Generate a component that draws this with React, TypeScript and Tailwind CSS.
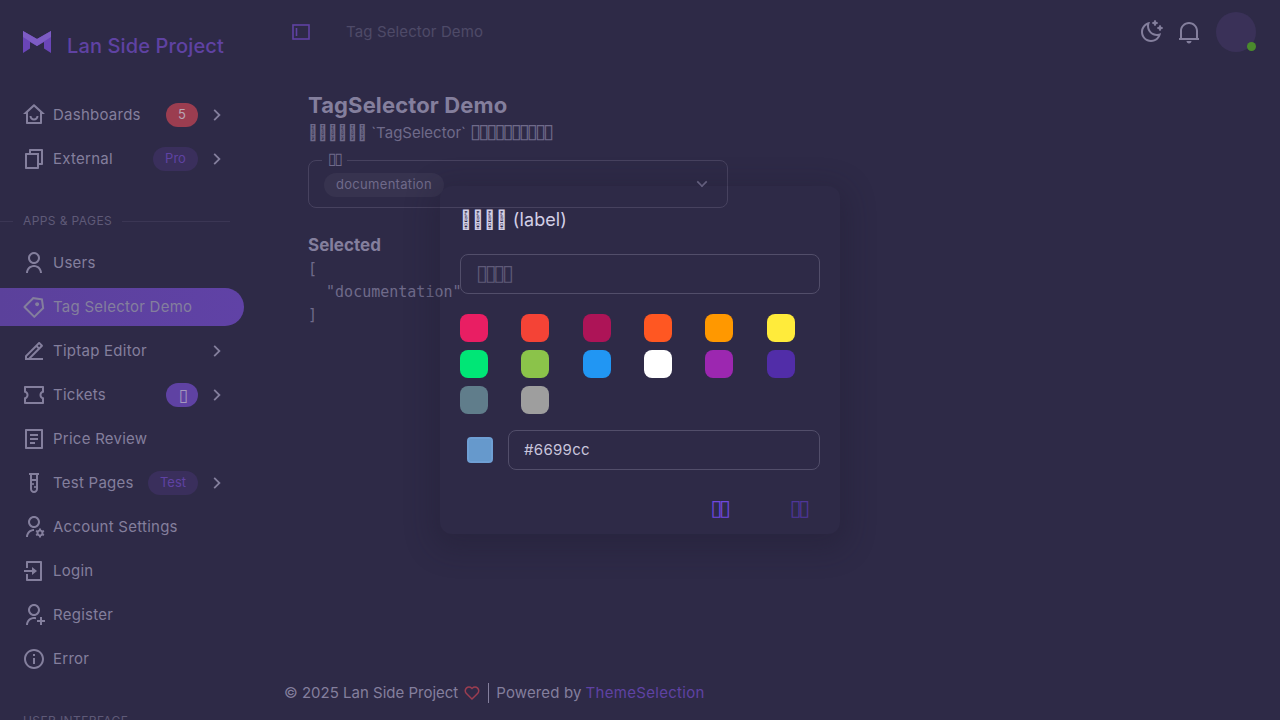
import React from "react";
import {
  RiArrowDownSLine,
  RiArrowRightSLine,
  RiFileList2Line,
  RiFileCopyLine,
  RiHeartLine,
  RiHomeSmileLine,
  RiInformationLine,
  RiLoginBoxLine,
  RiMoonClearLine,
  RiNotification2Line,
  RiEdit2Line,
  RiPriceTag3Line,
  RiTestTubeLine,
  RiTicketLine,
  RiUserAddLine,
  RiUserLine,
  RiUserSettingsLine,
} from "react-icons/ri";

// code point no font has: draws as the little hex box seen in the picture
const HEX = "\u{F0000}";

// the other missing glyphs in the picture are plain empty boxes
function Boxes({ count }: { count: number }) {
  return (
    <span className="font-['DejaVu_Sans'] text-[1.35em] leading-[0] tracking-[-0.15em]">{"\u25AF".repeat(count)}</span>
  );
}

const swatches = [
  "#e91e63",
  "#f44336",
  "#ad1457",
  "#ff5722",
  "#ff9800",
  "#ffeb3b",
  "#00e676",
  "#8bc34a",
  "#2196f3",
  "#ffffff",
  "#9c27b0",
  "#512da8",
  "#607d8b",
  "#9e9e9e",
];

type NavItem = {
  label: string;
  icon: React.ElementType;
  badge?: React.ReactNode;
  badgeClass?: string;
  chevron?: boolean;
  active?: boolean;
};

const topNav: NavItem[] = [
  { label: "Dashboards", icon: RiHomeSmileLine, badge: "5", badgeClass: "w-8 bg-[#9b3d50] text-[#b9a6b4]", chevron: true },
  { label: "External", icon: RiFileCopyLine, badge: "Pro", badgeClass: "w-[45px] bg-[#3a2f5c] text-[#5f42a3]", chevron: true },
];

const pageNav: NavItem[] = [
  { label: "Users", icon: RiUserLine },
  { label: "Tag Selector Demo", icon: RiPriceTag3Line, active: true },
  { label: "Tiptap Editor", icon: RiEdit2Line, chevron: true },
  { label: "Tickets", icon: RiTicketLine, badge: <Boxes count={1} />, badgeClass: "w-8 bg-[#5f42a3] text-[#a397bd]", chevron: true },
  { label: "Price Review", icon: RiFileList2Line },
  { label: "Test Pages", icon: RiTestTubeLine, badge: "Test", badgeClass: "w-[50px] bg-[#3a2f5c] text-[#5f42a3]", chevron: true },
  { label: "Account Settings", icon: RiUserSettingsLine },
  { label: "Login", icon: RiLoginBoxLine },
  { label: "Register", icon: RiUserAddLine },
  { label: "Error", icon: RiInformationLine },
];

function NavRow({ item }: { item: NavItem }) {
  const Icon = item.icon;
  return (
    <div
      className={`flex h-[38px] w-[244px] items-center rounded-r-full pl-[22px] pr-[18px] ${
        item.active ? "bg-gradient-to-r from-[#5b419b] to-[#6042a6]" : ""
      }`}
    >
      <Icon size={24} className="mr-[7px] shrink-0 text-[#847f9d]" />
      <span className="flex-1 text-[15px] tracking-[0.25px] text-[#847f9d]">{item.label}</span>
      {item.badge && (
        <span className={`flex h-6 items-center justify-center rounded-full text-[13px] ${item.badgeClass}`}>
          {item.badge}
        </span>
      )}
      {item.chevron && <RiArrowRightSLine size={22} className="ml-[8px] -mr-[2px] text-[#847f9d]" />}
    </div>
  );
}

function SectionLabel({ text }: { text: string }) {
  return (
    <div className="flex h-[20px] w-[230px] items-center">
      <div className="h-px w-[13px] bg-[#3b3654]" />
      <span className="mx-[10px] text-xs tracking-[0.4px] text-[#5f5a78]">{text}</span>
      <div className="h-px flex-1 bg-[#3b3654]" />
    </div>
  );
}

function Logo() {
  return (
    <svg width="28" height="22" viewBox="0 0 28 22">
      <path d="M0 0 L14 8 L28 0 V22 L21 17.5 V11 L14 15 L7 11 V17.5 L0 22 Z" fill="#6a45b8" />
      <path d="M0 0 L14 8 L28 0 V6 L14 15 L0 6 Z" fill="#7d5cc4" />
    </svg>
  );
}

export default function App() {
  return (
    <div
      className="relative h-[720px] w-[1280px] overflow-hidden bg-[#2e2a47]"
      style={{ fontFamily: "Inter, 'Liberation Sans', sans-serif" }}
    >
      <div className="flex h-full">
        {/* Sidebar */}
        <aside className="w-[260px] shrink-0 overflow-hidden">
          <div className="flex h-[96px] items-center pl-[23px] pb-[4px]">
            <div className="-mt-[8px]">
              <Logo />
            </div>
            <span className="ml-4 text-xl font-medium tracking-[0.13px] text-[#5f42a3]">Lan Side Project</span>
          </div>
          {topNav.map((item) => (
            <div key={item.label} className="mb-[6px]">
              <NavRow item={item} />
            </div>
          ))}
          <div className="mt-[33px] mb-[13px]">
            <SectionLabel text="APPS & PAGES" />
          </div>
          {pageNav.map((item) => (
            <div key={item.label} className="mb-[6px]">
              <NavRow item={item} />
            </div>
          ))}
          <div className="mt-[33px]">
            <SectionLabel text="USER INTERFACE" />
          </div>
        </aside>

        {/* Main */}
        <main className="flex min-w-0 flex-1 flex-col">
          <header className="flex h-[64px] items-center pl-[32px] pr-[24px]">
            <svg width="18" height="16" viewBox="0 0 18 16" fill="none" className="text-[#5f42a3]">
              <rect x="1" y="1" width="16" height="14" stroke="currentColor" strokeWidth="1.6" />
              <path d="M4.5 4 V12" stroke="currentColor" strokeWidth="1.6" />
            </svg>
            <span className="ml-[36px] text-[15px] tracking-[0.12px] text-[#4e4a68]">Tag Selector Demo</span>
            <div className="ml-auto flex items-center">
              <RiMoonClearLine size={24} className="text-[#847f9d]" />
              <RiNotification2Line size={24} className="ml-[14px] text-[#847f9d]" />
              <div className="relative ml-[15px] h-10 w-10 rounded-full bg-[#3a3158]">
                <span className="absolute bottom-[1px] right-0 h-[9px] w-[9px] rounded-full bg-[#4a8a2c]" />
              </div>
            </div>
          </header>

          <div className="pl-[48px] pt-[26px]">
            <h1 className="text-[22px] font-bold leading-[30px] tracking-[0.12px] text-[#847f9d]">TagSelector Demo</h1>
            <p className="text-[15px] leading-[26px] text-[#6f6a8a]">
              {HEX.repeat(6)} `TagSelector` <Boxes count={10} />
            </p>

            <div className="relative mt-[14px] flex h-[48px] w-[420px] items-center justify-between rounded-lg border border-[#47425f] pl-[15px] pr-[15px]">
              <span className="absolute -top-[8px] left-[13px] bg-[#2e2a47] px-[6px] text-xs leading-[14px] text-[#6f6a8a]">
                <Boxes count={2} />
              </span>
              <span className="mt-[1px] flex h-6 items-center rounded-full bg-[#37334f] px-3 text-[13px] tracking-[0.3px] text-[#6f6a8a]">
                documentation
              </span>
              <RiArrowDownSLine size={20} className="text-[#6f6a8a]" />
            </div>

            <h2 className="mt-[26px] text-[17px] font-bold leading-[22px] text-[#847f9d]">Selected</h2>
            <pre
              className="mt-[2px] text-[15px] leading-[23px] text-[#6f6a8a]"
              style={{ fontFamily: "'DejaVu Sans Mono', monospace" }}
            >
              {'[\n  "documentation"\n]'}
            </pre>
          </div>

          <footer className="mt-auto flex h-[54px] items-center pl-[24px] text-[15px] text-[#847f9d]">
            <span>© 2025 Lan Side Project</span>
            <RiHeartLine size={18} className="mx-[5px] text-[#9b3d50]" />
            <span className="mr-[7px] ml-[2px] h-[20px] w-px bg-[#847f9d]" />
            <span className="tracking-[0.15px]">Powered by</span>
            <span className="ml-1 tracking-[0.3px] text-[#5f42a3]">ThemeSelection</span>
          </footer>
        </main>
      </div>

      {/* Dialog, still fading in */}
      <div className="absolute left-[440px] top-[186px] h-[348px] w-[400px] rounded-xl shadow-[0_8px_28px_8px_rgba(30,26,48,0.3)]">
        <div className="px-5 pt-[22px]">
          <div className="text-lg leading-[24px] tracking-[0.1px] text-[#d3cfe6]">{HEX.repeat(4)} (label)</div>
          <div className="mt-[22px] flex h-10 items-center rounded-lg border border-[#524e6a] px-[15px] text-base text-[#5f5a78]">
            <span>
              <Boxes count={4} />
            </span>
          </div>
          <div className="mt-5 grid w-[368px] grid-cols-6 gap-y-2">
            {swatches.map((c) => (
              <span key={c} className="h-7 w-7 rounded-lg" style={{ backgroundColor: c }} />
            ))}
          </div>
          <div className="mt-4 flex items-center">
            <span className="ml-[7px] h-[26px] w-[26px] rounded-[4px] border-2 border-[#6f9fd4] bg-[#6699cc]" />
            <div className="ml-[15px] flex h-10 flex-1 items-center rounded-lg border border-[#524e6a] px-[15px] text-[15px] tracking-[0.3px] text-[#c9c5dc]">
              #6699cc
            </div>
          </div>
          <div className="mt-[27px] flex justify-end pr-[13px] text-base leading-[24px]">
            <span className="text-[#7048e0]">
              <Boxes count={2} />
            </span>
            <span className="ml-[62px] text-[#4f3699]">
              <Boxes count={2} />
            </span>
          </div>
        </div>
      </div>
    </div>
  );
}
